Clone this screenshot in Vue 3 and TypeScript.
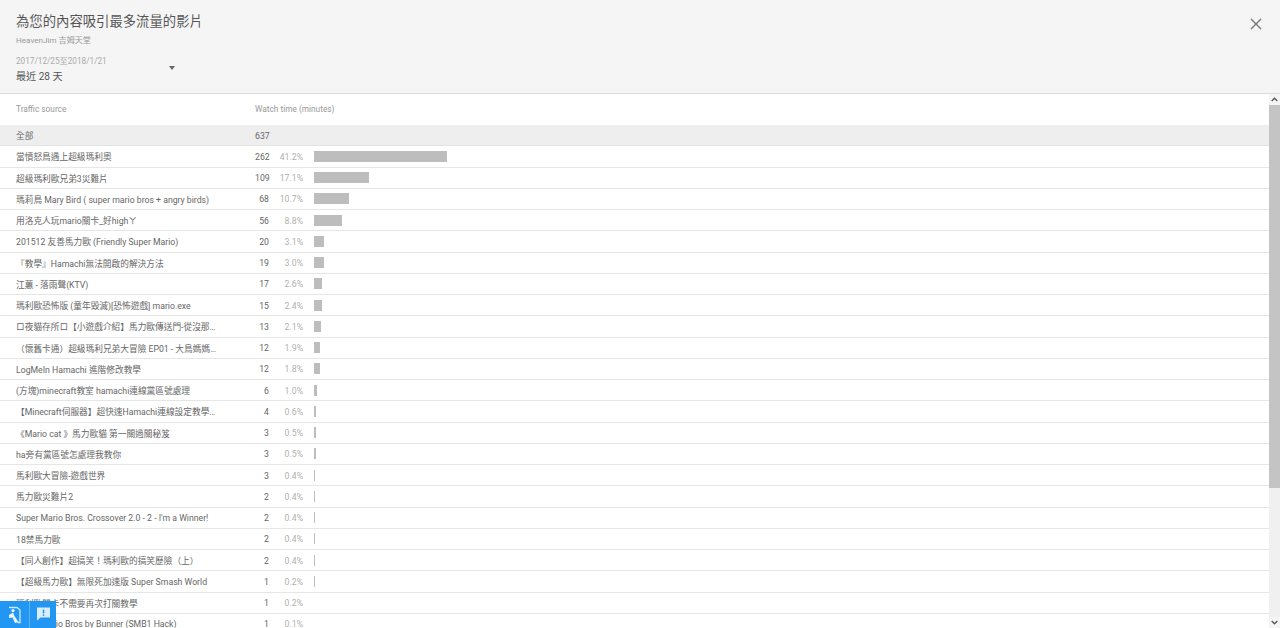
<template>
  <div class="dialog">
    <header class="dialog-head">
      <div class="head-main">
        <h1 class="title">為您的內容吸引最多流量的影片</h1>
        <div class="channel">HeavenJim 吉姆天堂</div>
        <div class="range">
          <div class="range-text">
            <div class="range-dates">2017/12/25至2018/1/21</div>
            <div class="range-label">最近 28 天</div>
          </div>
          <span class="caret"></span>
        </div>
      </div>
      <button class="close-btn" aria-label="close">
        <svg width="12" height="12" viewBox="0 0 12 12" fill="none">
          <path d="M1 1L11 11M11 1L1 11" stroke="#757575" stroke-width="1.4" />
        </svg>
      </button>
    </header>

    <div class="dialog-body">
      <div class="table">
        <div class="table-head">
          <div class="col-name">Traffic source</div>
          <div class="col-watch">Watch time (minutes)</div>
        </div>
        <div class="row row-total">
          <div class="col-name">全部</div>
          <div class="col-watch">637</div>
        </div>
        <div v-for="row in rows" :key="row.name" class="row">
          <div class="col-name">{{ row.name }}</div>
          <div class="col-value">{{ row.value }}</div>
          <div class="col-pct">{{ row.pct.toFixed(1) }}%</div>
          <div class="col-bar">
            <div v-if="!row.noBar" class="bar" :style="{ width: row.pct * 3.23 + 'px' }"></div>
          </div>
        </div>
      </div>

      <div class="scrollbar">
        <div class="scroll-arrow">
          <svg width="7" height="5" viewBox="0 0 7 5" fill="none">
            <path d="M0.7 4L3.5 1.2L6.3 4" stroke="#555" stroke-width="1.3" />
          </svg>
        </div>
        <div class="scroll-thumb"></div>
        <div class="scroll-track"></div>
        <div class="scroll-arrow">
          <svg width="7" height="5" viewBox="0 0 7 5" fill="none">
            <path d="M0.7 1L3.5 3.8L6.3 1" stroke="#555" stroke-width="1.3" />
          </svg>
        </div>
      </div>
    </div>

    <!-- 左下角浮动按钮 -->
    <div class="help-widget">
      <button class="help-btn help-btn-a" aria-label="accessibility">
        <svg width="13" height="18" viewBox="0 0 13 18" fill="none">
          <path d="M1 1.5H9L12 4V16.5H9.5" stroke="#cfe8fb" stroke-width="1.3" />
          <circle cx="5" cy="4.6" r="1.6" fill="#e8f5fe" />
          <path d="M1 9L5 6.5L6.5 10L10.5 16L7 17L4.5 11.5L1 12Z" fill="#e8f5fe" />
        </svg>
      </button>
      <button class="help-btn help-btn-b" aria-label="feedback">
        <svg width="15" height="14" viewBox="0 0 15 14" fill="none">
          <path d="M1 0.5H14V10.5H4.5L1 13.5Z" fill="#d9eefc" />
          <rect x="6.8" y="2.6" width="1.5" height="3.8" fill="#2196f3" />
          <rect x="6.8" y="7.4" width="1.5" height="1.5" fill="#2196f3" />
        </svg>
      </button>
    </div>
  </div>
</template>

<script setup lang="ts">
interface TrafficRow {
  name: string;
  value: number;
  pct: number;
  noBar?: boolean;
}

const rows: TrafficRow[] = [
  { name: '當憤怒鳥遇上超級瑪利奧', value: 262, pct: 41.2 },
  { name: '超級瑪利歐兄弟3災難片', value: 109, pct: 17.1 },
  { name: '瑪莉鳥 Mary Bird ( super mario bros + angry birds)', value: 68, pct: 10.7 },
  { name: '用洛克人玩mario關卡_好highㄚ', value: 56, pct: 8.8 },
  { name: '201512 友善馬力歐 (Friendly Super Mario)', value: 20, pct: 3.1 },
  { name: '『教學』Hamachi無法開啟的解決方法', value: 19, pct: 3.0 },
  { name: '江蕙 - 落雨聲(KTV)', value: 17, pct: 2.6 },
  { name: '瑪利歐恐怖版 (童年毀滅)[恐怖遊戲] mario.exe', value: 15, pct: 2.4 },
  { name: 'ロ夜貓存所ロ【小遊戲介紹】馬力歐傳送門-從沒那麼好玩過', value: 13, pct: 2.1 },
  { name: '（懷舊卡通）超級瑪利兄弟大冒險 EP01 - 大鳥媽媽的蛋', value: 12, pct: 1.9 },
  { name: 'LogMeIn Hamachi 進階修改教學', value: 12, pct: 1.8 },
  { name: '(方塊)minecraft教室 hamachi連線黨區號處理', value: 6, pct: 1.0 },
  { name: '【Minecraft伺服器】超快速Hamachi連線設定教學與示範', value: 4, pct: 0.6 },
  { name: '《Mario cat 》馬力歐貓 第一關過關秘笈', value: 3, pct: 0.5 },
  { name: 'ha旁有黨區號怎處理我教你', value: 3, pct: 0.5 },
  { name: '馬利歐大冒險-遊戲世界', value: 3, pct: 0.4 },
  { name: '馬力歐災難片2', value: 2, pct: 0.4 },
  { name: "Super Mario Bros. Crossover 2.0 - 2 - I'm a Winner!", value: 2, pct: 0.4 },
  { name: '18禁馬力歐', value: 2, pct: 0.4 },
  { name: '【同人創作】超搞笑！瑪利歐的搞笑歷險（上）', value: 2, pct: 0.4 },
  { name: '【超級馬力歐】無限死加速版 Super Smash World', value: 1, pct: 0.2 },
  { name: '瑪利歐關卡不需要再次打關教學', value: 1, pct: 0.2, noBar: true },
  { name: 'Super Mario Bros by Bunner (SMB1 Hack)', value: 1, pct: 0.1, noBar: true }
];
</script>

<style>
html,
body {
  margin: 0;
  height: 100%;
  overflow: hidden;
  background: #fff;
}
</style>

<style scoped>
.dialog {
  position: relative;
  display: flex;
  flex-direction: column;
  height: 628px;
  overflow: hidden;
  font-family: Roboto, "Noto Sans CJK TC", sans-serif;
  color: #333;
}

.dialog-head {
  display: flex;
  justify-content: space-between;
  flex: none;
  box-sizing: border-box;
  height: 94px;
  padding: 13px 18px 0 16px;
  background: #f5f5f5;
  border-bottom: 1px solid #dcdcdc;
}

.title {
  margin: 0;
  font-size: 13.35px;
  font-weight: 400;
  line-height: 18px;
  color: #555;
}

.channel {
  margin-top: 3px;
  font-size: 8.1px;
  line-height: 13px;
  color: #999;
}

.range {
  display: flex;
  align-items: center;
  margin-top: 8px;
}

.range-text {
  width: 153px;
}

.range-dates {
  font-size: 8.2px;
  line-height: 12px;
  color: #aaa;
}

.range-label {
  margin-top: 3px;
  font-size: 10.1px;
  line-height: 14px;
  color: #555;
}

.caret {
  width: 0;
  height: 0;
  margin-bottom: 3px;
  border-left: 3.5px solid transparent;
  border-right: 3.5px solid transparent;
  border-top: 4px solid #666;
}

.close-btn {
  display: flex;
  width: 12px;
  height: 12px;
  margin-top: 5px;
  padding: 0;
  border: none;
  background: transparent;
}

.dialog-body {
  display: flex;
  flex: 1;
  min-height: 0;
}

.table {
  flex: 1;
  min-width: 0;
  font-size: 8.7px;
  color: #666;
}

.table-head {
  display: flex;
  align-items: center;
  box-sizing: border-box;
  height: 31px;
  padding: 0 0 2px 16px;
  font-size: 8.3px;
  color: #999;
}

.row {
  display: flex;
  align-items: center;
  box-sizing: border-box;
  height: 21.25px;
  padding-left: 16px;
  border-bottom: 1px solid #e6e6e6;
}

.row-total {
  background: #eeeeee;
  border-bottom-color: #e2e2e2;
}

.row .col-name,
.row .col-watch,
.col-value,
.col-pct {
  padding-top: 1px;
}

.col-name {
  flex: none;
  box-sizing: border-box;
  width: 239px;
  padding-right: 34px;
  overflow: hidden;
  white-space: nowrap;
  text-overflow: ellipsis;
}

.col-watch {
  white-space: nowrap;
}

.col-value {
  flex: none;
  width: 14px;
  text-align: right;
}

.col-pct {
  flex: none;
  width: 34px;
  text-align: right;
  color: #b0b0b0;
}

.col-bar {
  flex: 1;
  padding-left: 11px;
}

.bar {
  height: 11px;
  background: #bdbdbd;
}

.scrollbar {
  display: flex;
  flex-direction: column;
  flex: none;
  width: 11px;
  background: #f0f0f0;
}

.scroll-arrow {
  display: flex;
  align-items: center;
  justify-content: center;
  flex: none;
  height: 11px;
  background: #f5f5f5;
}

.scroll-thumb {
  flex: none;
  height: 383px;
  background: #c4c4c4;
}

.scroll-track {
  flex: 1;
}

.help-widget {
  position: absolute;
  left: 0;
  bottom: 0;
  display: flex;
  height: 27px;
}

.help-btn {
  display: flex;
  align-items: center;
  justify-content: center;
  padding: 0;
  border: none;
  background: #2196f3;
}

.help-btn-a {
  width: 30px;
  border-right: 1px solid #5db2f6;
}

.help-btn-b {
  width: 26px;
  padding-bottom: 2px;
}
</style>
